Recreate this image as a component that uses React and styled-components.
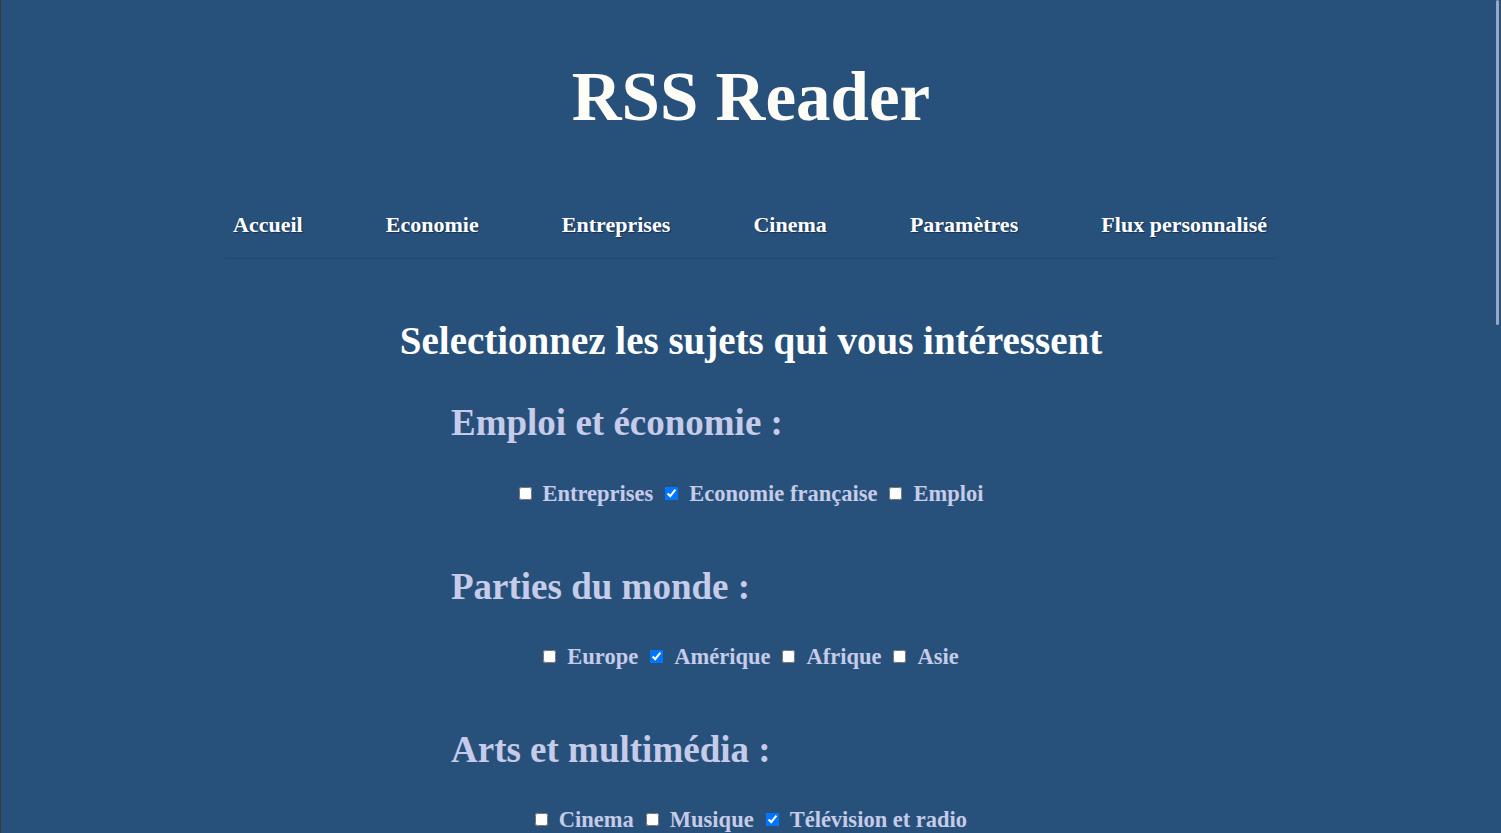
import React, { useState } from 'react';
import styled, { createGlobalStyle } from 'styled-components';

const GlobalStyle = createGlobalStyle`
  html, body {
    margin: 0;
    padding: 0;
    overflow: hidden;
    background: #27517a;
  }
  body {
    font-family: "Liberation Serif", "DejaVu Serif", serif;
  }
`;

const links = [
  'Accueil',
  'Economie',
  'Entreprises',
  'Cinema',
  'Paramètres',
  'Flux personnalisé',
];

const groups = [
  {
    title: 'Emploi et économie :',
    items: [
      { label: 'Entreprises', checked: false },
      { label: 'Economie française', checked: true },
      { label: 'Emploi', checked: false },
    ],
  },
  {
    title: 'Parties du monde :',
    items: [
      { label: 'Europe', checked: false },
      { label: 'Amérique', checked: true },
      { label: 'Afrique', checked: false },
      { label: 'Asie', checked: false },
    ],
  },
  {
    title: 'Arts et multimédia :',
    items: [
      { label: 'Cinema', checked: false },
      { label: 'Musique', checked: false },
      { label: 'Télévision et radio', checked: true },
    ],
  },
];

const Group = ({ group }) => {
  const [values, setValues] = useState(group.items.map(i => i.checked));

  const toggle = index => {
    setValues(values.map((v, i) => (i === index ? !v : v)));
  };

  return (
    <Topic>
      <TopicTitle>{group.title}</TopicTitle>
      <Choices>
        {group.items.map((item, index) => (
          <Choice key={item.label}>
            <Box
              type="checkbox"
              checked={values[index]}
              onChange={() => toggle(index)}
            />
            {item.label}
          </Choice>
        ))}
      </Choices>
    </Topic>
  );
};

const App = () => {
  return (
    <Page>
      <GlobalStyle />
      <Title>RSS Reader</Title>
      <Menu>
        {links.map(link => (
          <MenuLink key={link} href="#">
            {link}
          </MenuLink>
        ))}
      </Menu>
      <Heading>Selectionnez les sujets qui vous intéressent</Heading>
      <Topics>
        {groups.map(group => (
          <Group key={group.title} group={group} />
        ))}
      </Topics>
      {/* barre de défilement fine, par dessus la page */}
      <ScrollThumb />
    </Page>
  );
};

export default App;

const Page = styled.div`
  min-height: 833px;
  background: #27517a;
  border-left: 1px solid #3b3b3b;
  box-sizing: border-box;
  padding-top: 63px;
  padding-bottom: 200px;
`;

const Title = styled.h1`
  margin: 0;
  font-size: 69px;
  line-height: 1;
  font-weight: 700;
  text-align: center;
  color: #fdfcf7;
`;

const Menu = styled.nav`
  width: 1050px;
  margin: 80px auto 0;
  padding: 0 9px 20px 7px;
  box-sizing: border-box;
  display: flex;
  justify-content: space-between;
  border-bottom: 1px solid #22486e;
`;

const MenuLink = styled.a`
  font-size: 22px;
  line-height: 1.2;
  font-weight: 700;
  color: #ffffff;
  text-decoration: none;
  text-shadow: 1px 1px 1px rgba(8, 20, 60, 0.55);
`;

const Heading = styled.h2`
  margin: 59px 0 0;
  font-size: 39px;
  line-height: 1.2;
  font-weight: 700;
  text-align: center;
  color: #ffffff;
`;

const Topics = styled.div`
  width: 600px;
  margin: 36px auto 0;
  display: flex;
  flex-direction: column;
  gap: 58px;
`;

const Topic = styled.section`
  display: flex;
  flex-direction: column;
  gap: 34px;
`;

const TopicTitle = styled.h3`
  margin: 0;
  font-size: 37px;
  line-height: 1.2;
  font-weight: 700;
  color: #c5cbe8;
`;

const Choices = styled.div`
  display: flex;
  justify-content: center;
  gap: 12px;
`;

const Choice = styled.label`
  display: inline-flex;
  align-items: center;
  gap: 11px;
  font-size: 22.5px;
  line-height: 1.2;
  font-weight: 700;
  color: #c5cbe8;
`;

const Box = styled.input`
  margin: 0;
  width: 13px;
  height: 13px;
`;

const ScrollThumb = styled.div`
  position: fixed;
  top: 0;
  right: 2px;
  width: 3px;
  height: 325px;
  border-radius: 2px;
  background: #95a9c4;
`;
